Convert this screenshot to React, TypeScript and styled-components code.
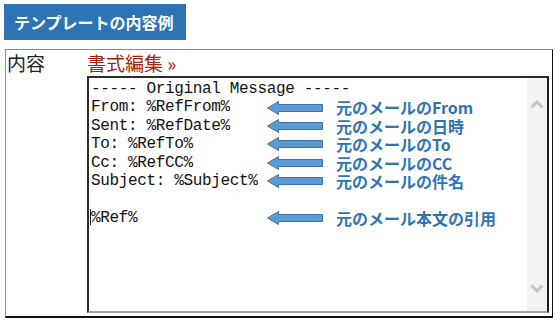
import React from 'react';
import styled, { createGlobalStyle } from 'styled-components';

const GlobalStyle = createGlobalStyle`
    body {
        margin: 0;
        background: #fff;
        font-family: "Noto Sans CJK JP", "Noto Sans", sans-serif;
    }
`;

const Page = styled.div`
    padding: 4px;
`;

const Heading = styled.div`
    display: inline-block;
    height: 36px;
    line-height: 36px;
    padding: 0 12px 0 10px;
    background-color: #2e74b5;
    color: #fff;
    font-size: 16px;
    font-weight: 700;
`;

const Panel = styled.div`
    display: grid;
    grid-template-columns: 81px 1fr;
    box-sizing: border-box;
    width: 548px;
    margin: 9px 0 0 1px;
    border-top: 1px solid #8c8c8c;
    border-left: 1px solid #8c8c8c;
    border-right: 1px solid #111;
    border-bottom: 2px solid #111;
`;

const FieldLabel = styled.div`
    padding-left: 1px;
    font-size: 19px;
    line-height: 26px;
    color: #222;
`;

const FieldBody = styled.div`
    display: flex;
    flex-direction: column;
    padding: 0 3px 3px 0;
`;

const EditLink = styled.a`
    font-size: 19px;
    line-height: 26px;
    color: #a3260e;
    text-decoration: none;
`;

const Editor = styled.div`
    display: flex;
    box-sizing: border-box;
    height: 237px;
    border-top: 2px solid #2c2c2c;
    border-left: 2px solid #2c2c2c;
    border-right: 2px solid #1a1a1a;
    border-bottom: 2px solid #a4a4a4;
`;

const Lines = styled.div`
    flex: 1;
    padding: 2px 0 0 2px;
    overflow: hidden;
`;

const Row = styled.div`
    display: grid;
    grid-template-columns: 176px 56px auto;
    align-items: center;
    height: 18.4px;
`;

const Code = styled.span<{ $span?: boolean }>`
    grid-column: ${(p) => (p.$span ? '1 / -1' : 'auto')};
    white-space: pre;
    font-family: "Liberation Mono", "DejaVu Sans Mono", monospace;
    font-size: 16px;
    letter-spacing: -0.35px;
    line-height: 18.4px;
    color: #111;
`;

const Caret = styled.span`
    display: inline-block;
    width: 1px;
    height: 16px;
    margin-left: -1px;
    vertical-align: -3px;
    background: #222;
`;

const Note = styled.span`
    margin-left: 13px;
    white-space: nowrap;
    font-size: 16px;
    font-weight: 700;
    line-height: 18.4px;
    color: #2e74b5;
`;

const ScrollTrack = styled.div`
    display: flex;
    flex-direction: column;
    justify-content: space-between;
    align-items: center;
    width: 20px;
    padding: 22px 0 18px;
    background: #f2f2f2;
`;

function Arrow() {
    return (
        <svg width="56" height="14" viewBox="0 0 56 14">
            <polygon
                points="0.5,7 11.5,0.5 11.5,3.5 55.5,3.5 55.5,10.5 11.5,10.5 11.5,13.5"
                fill="#5b9bd5"
                stroke="#41719c"
                strokeWidth="1"
            />
        </svg>
    );
}

function Chevron({ up }: { up?: boolean }) {
    return (
        <svg width="14" height="9" viewBox="0 0 14 9">
            <polyline
                points={up ? '1.5,7.5 7,2 12.5,7.5' : '1.5,1.5 7,7 12.5,1.5'}
                fill="none"
                stroke="#c6c6c6"
                strokeWidth="3"
            />
        </svg>
    );
}

const lines: { code: string; note?: string }[] = [
    { code: 'From: %RefFrom%', note: '元のメールのFrom' },
    { code: 'Sent: %RefDate%', note: '元のメールの日時' },
    { code: 'To: %RefTo%', note: '元のメールのTo' },
    { code: 'Cc: %RefCC%', note: '元のメールのCC' },
    { code: 'Subject: %Subject%', note: '元のメールの件名' },
    { code: '' },
];

export default function App() {
    return (
        <Page>
            <GlobalStyle />
            <Heading>テンプレートの内容例</Heading>
            <Panel>
                <FieldLabel>内容</FieldLabel>
                <FieldBody>
                    <EditLink href="#">書式編集 »</EditLink>
                    <Editor>
                        <Lines>
                            <Row>
                                <Code $span>----- Original Message -----</Code>
                            </Row>
                            {lines.map((l, i) => (
                                <Row key={i}>
                                    <Code>{l.code}</Code>
                                    {l.note && <Arrow />}
                                    {l.note && <Note>{l.note}</Note>}
                                </Row>
                            ))}
                            <Row>
                                <Code><Caret />%Ref%</Code>
                                <Arrow />
                                <Note>元のメール本文の引用</Note>
                            </Row>
                        </Lines>
                        <ScrollTrack>
                            <Chevron up />
                            <Chevron />
                        </ScrollTrack>
                    </Editor>
                </FieldBody>
            </Panel>
        </Page>
    );
}
